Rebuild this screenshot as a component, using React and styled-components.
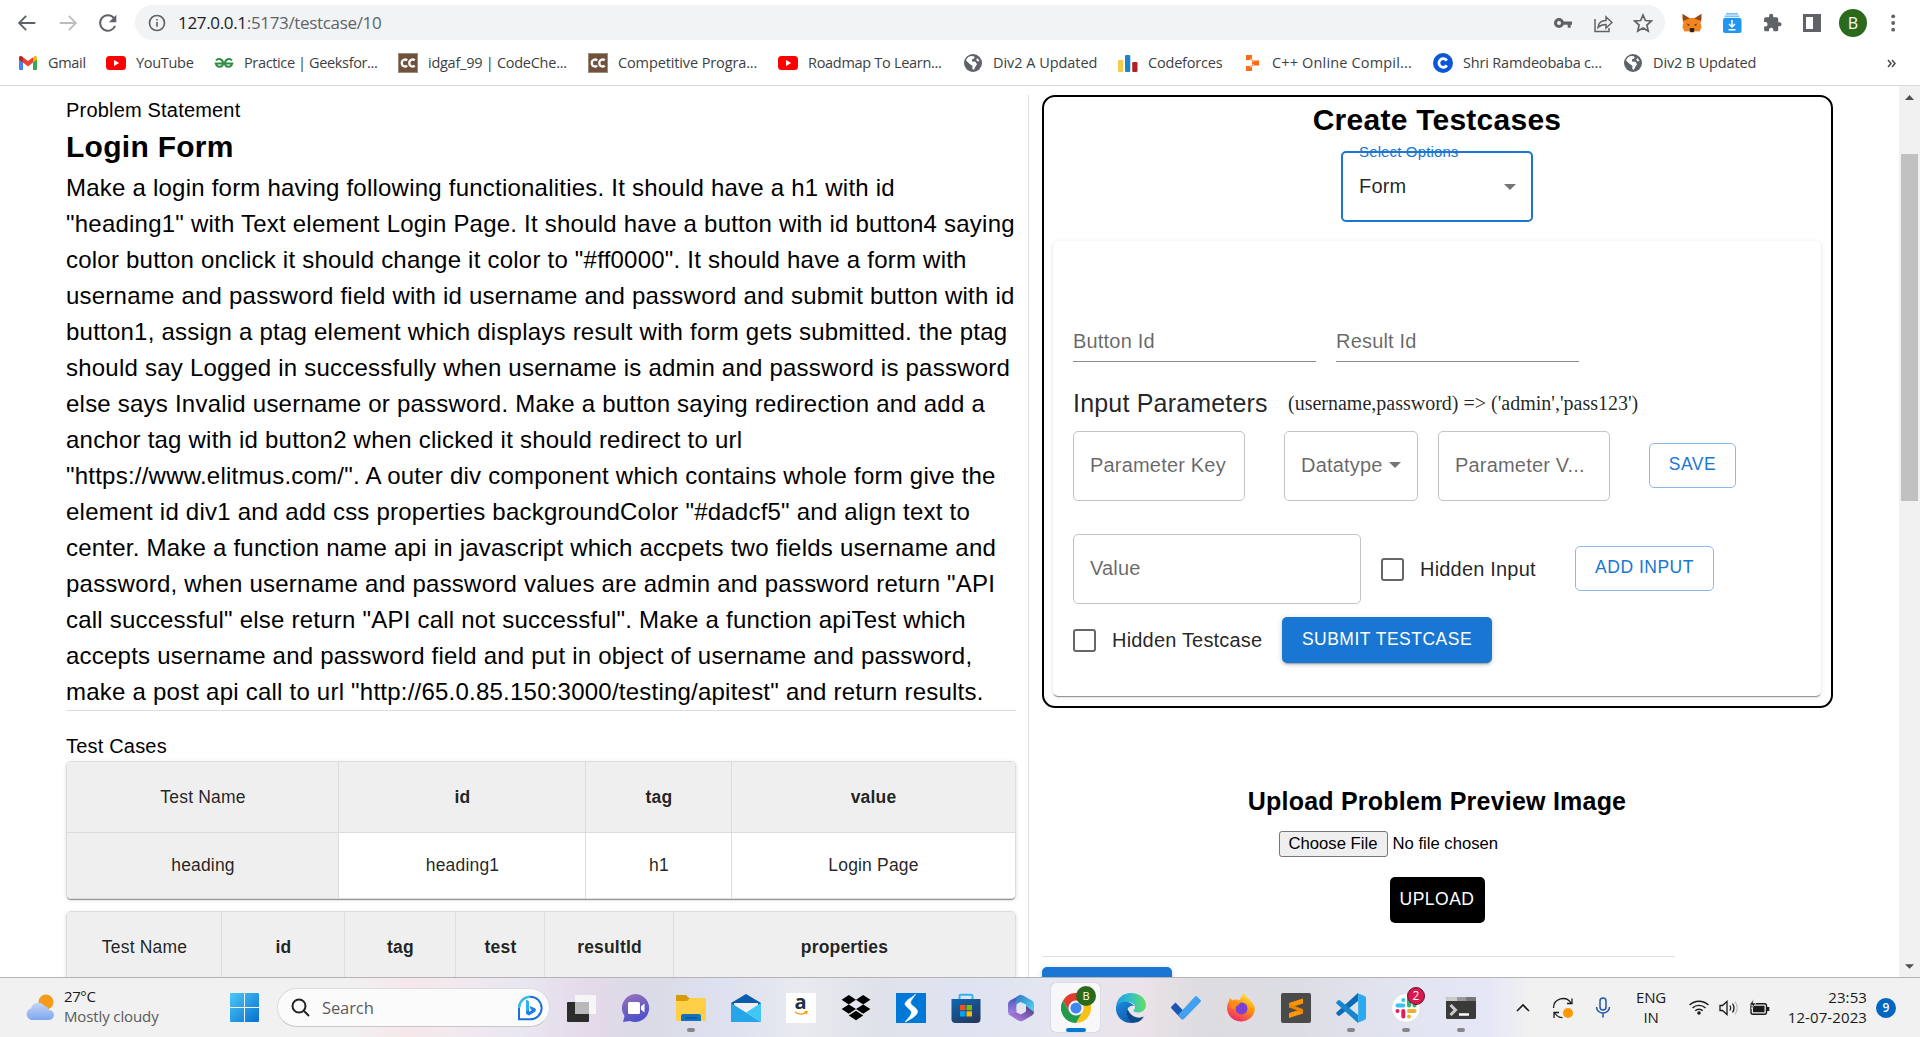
import React from "react";
import styled, { createGlobalStyle } from "styled-components";

const GlobalStyle = createGlobalStyle`
  *, *::before, *::after { box-sizing: border-box; }
  html, body { margin: 0; padding: 0; overflow: hidden; background: #fff; }
  svg { display: block; flex: none; }
`;

const sans = `"Liberation Sans", Arial, sans-serif`;
const ui = `"Open Sans", "Noto Sans", sans-serif`;
const blue = "#1976d2";

/* ---------- browser chrome ---------- */

const Screen = styled.div`
  width: 1920px;
  height: 1037px;
  display: flex;
  flex-direction: column;
  overflow: hidden;
  font-family: ${sans};
  color: #000;
`;

const Browser = styled.header`
  height: 86px;
  flex: none;
  display: flex;
  flex-direction: column;
  border-bottom: 1px solid #d8d9db;
  font-family: ${ui};
`;

const AddressRow = styled.div`
  height: 45px;
  display: flex;
  align-items: center;
  padding-left: 17px;
`;

const NavIcons = styled.div`
  display: flex;
  gap: 20.5px;
  width: 118px;
`;

const AddressBar = styled.div`
  width: 1530px;
  height: 35px;
  border-radius: 18px;
  background: #f1f3f4;
  display: flex;
  align-items: center;
  padding: 0 13px 0 13px;
`;

const Url = styled.span`
  margin-left: 12px;
  flex: 1;
  font-size: 17px;
  line-height: 24px;
  letter-spacing: -0.33px;
  color: #5f6368;
  white-space: nowrap;
`;

const Host = styled.span`
  color: #202124;
`;

const BarIcons = styled.div`
  display: flex;
  gap: 20px;
  margin-right: -1px;
`;

const Extensions = styled.div`
  display: flex;
  align-items: center;
  gap: 20px;
  margin-left: 17px;
`;

const Avatar = styled.span`
  width: 28px;
  height: 28px;
  margin: 0 -3px;
  border-radius: 50%;
  background: #2b6a1c;
  color: #fff;
  font-size: 16px;
  line-height: 28px;
  text-align: center;
`;

const Bookmarks = styled.nav`
  height: 36px;
  display: flex;
  align-items: center;
  padding-left: 18px;
`;

const Bookmark = styled.span`
  width: ${(p) => p.$w}px;
  flex: none;
  display: flex;
  align-items: center;
  gap: 10px;
  font-size: 14.5px;
  line-height: 20px;
  letter-spacing: ${(p) => p.$ls}px;
  color: #3c4043;
  white-space: nowrap;
`;

/* ---------- page ---------- */

const Page = styled.main`
  height: 891px;
  flex: none;
  display: flex;
  overflow: hidden;
`;

const Left = styled.section`
  width: 1029px;
  padding-left: 66px;
  margin: 9px 0 0;
  flex: none;
  border-right: 1px solid #e0e0e0;
`;

const LeftInner = styled.div`
  width: 950px;
`;

const Caption = styled.p`
  margin: 0;
  font-size: 20px;
  line-height: 30px;
  letter-spacing: 0.19px;
`;

const ProblemTitle = styled.h2`
  margin: 0 0 2px;
  font-size: 30px;
  line-height: 43px;
  letter-spacing: 0.28px;
`;

const Statement = styled.p`
  margin: 0;
  font-size: 24px;
  line-height: 36px;
  letter-spacing: 0.225px;
`;

const Rule = styled.hr`
  margin: 0;
  border: 0;
  height: 1px;
  width: ${(p) => p.$w};
  background: #dedede;
`;

const TestCases = styled.div`
  margin-top: 20px;
`;

const TestTable = styled.div`
  display: grid;
  grid-template-columns: ${(p) => p.$cols};
  margin-bottom: 12px;
  border: 1px solid #dcdcdc;
  border-radius: 5px;
  overflow: hidden;
  box-shadow: 0 2px 1px -1px rgba(0, 0, 0, 0.3), 0 1px 1px rgba(0, 0, 0, 0.14), 0 1px 4px rgba(0, 0, 0, 0.12);
`;

const Cell = styled.div`
  height: ${(p) => (p.$head ? 71 : 65)}px;
  display: flex;
  align-items: center;
  justify-content: center;
  background: ${(p) => (p.$head || p.$name ? "#efefef" : "#fff")};
  border-right: ${(p) => (p.$last ? 0 : 1)}px solid #dcdcdc;
  border-bottom: ${(p) => (p.$head ? 1 : 0)}px solid #dcdcdc;
  padding-top: ${(p) => (p.$head ? 1 : 0)}px;
  padding-left: ${(p) => (p.$last ? 0 : 1)}px;
  font-size: 17.5px;
  font-weight: ${(p) => (p.$bold ? 700 : 400)};
  letter-spacing: 0.18px;
  color: rgba(0, 0, 0, 0.87);
`;

const Right = styled.section`
  width: 870px;
  padding: 9px 0 0 13px;
  flex: none;
`;

const CreateCard = styled.div`
  width: 791px;
  height: 613px;
  border: 2px solid #000;
  border-radius: 13px;
  display: flex;
  flex-direction: column;
  align-items: center;
  padding-right: 1px;
  isolation: isolate;
`;

const CardTitle = styled.h2`
  margin: 5px 0 0;
  font-size: 30px;
  line-height: 36px;
  letter-spacing: 0.25px;
`;

const OptionSelect = styled.div`
  position: relative;
  margin-top: 13px;
  width: 192px;
  height: 71px;
  border: 2px solid ${blue};
  border-radius: 5px;
  display: flex;
  align-items: center;
  justify-content: space-between;
  padding: 0 15px 0 16px;
  font-size: 20px;
  letter-spacing: 0.19px;
  color: rgba(0, 0, 0, 0.87);
`;

const FloatLabel = styled.span`
  position: absolute;
  left: 16px;
  top: -10px;
  z-index: -1;
  font-size: 15px;
  line-height: 18px;
  letter-spacing: 0.14px;
  color: ${blue};
  white-space: nowrap;
`;

const Paper = styled.div`
  margin-top: 19px;
  width: 768px;
  height: 455px;
  border-radius: 5px;
  padding: 80px 20px 0;
  box-shadow: 0 2px 1px -1px rgba(0, 0, 0, 0.3), 0 1px 1px rgba(0, 0, 0, 0.14), 0 1px 4px rgba(0, 0, 0, 0.12);
`;

const FormRow = styled.div`
  display: flex;
  align-items: center;
  margin-top: ${(p) => p.$mt || 0}px;
`;

const LineField = styled.div`
  width: 243px;
  height: 41px;
  margin-right: 20px;
  border-bottom: 1px solid rgba(0, 0, 0, 0.45);
  font-size: 20px;
  line-height: 41px;
  letter-spacing: 0.19px;
  color: rgba(0, 0, 0, 0.6);
`;

const ParamTitle = styled.h6`
  margin: 0;
  width: 215px;
  font-size: 25px;
  line-height: 40px;
  font-weight: 400;
  letter-spacing: 0.19px;
  color: rgba(0, 0, 0, 0.87);
`;

const Signature = styled.span`
  font-family: "Liberation Serif", "Times New Roman", serif;
  font-size: 20px;
  line-height: 24px;
  color: rgba(0, 0, 0, 0.87);
`;

const BoxField = styled.div`
  width: ${(p) => p.$w}px;
  height: 70px;
  margin-right: ${(p) => p.$mr}px;
  border: 1px solid #c4c4c4;
  border-radius: 5px;
  padding: 0 16px 2px;
  display: flex;
  align-items: center;
  justify-content: space-between;
  font-size: 20px;
  letter-spacing: 0.19px;
  color: rgba(0, 0, 0, 0.6);
  white-space: nowrap;
`;

const Button = styled.button`
  width: ${(p) => p.$w}px;
  height: ${(p) => p.$h || 45}px;
  margin: ${(p) => (p.$solid ? "0" : "0 0 2px")};
  padding: 0 0 ${(p) => (p.$solid ? 2 : 1)}px;
  border: ${(p) => (p.$solid ? "0" : "1px solid #8cbae8")};
  border-radius: 5px;
  background: ${(p) => p.$solid || "#fff"};
  color: ${(p) => (p.$solid ? "#fff" : blue)};
  font-family: ${sans};
  font-size: 17.5px;
  letter-spacing: 0.5px;
  white-space: nowrap;
  box-shadow: ${(p) =>
    p.$raised
      ? "0 4px 1px -3px rgba(0,0,0,.2), 0 2px 3px rgba(0,0,0,.14), 0 1px 6px rgba(0,0,0,.12)"
      : "none"};
`;

const CheckLabel = styled.label`
  width: ${(p) => p.$w}px;
  display: flex;
  align-items: center;
  gap: 16px;
  font-size: 20px;
  line-height: 30px;
  letter-spacing: 0.19px;
  color: rgba(0, 0, 0, 0.87);
  white-space: nowrap;
`;

const CheckBox = styled.span`
  width: 23px;
  height: 23px;
  border: 2.5px solid #666;
  border-radius: 3px;
`;

const Upload = styled.div`
  width: 790px;
  margin-top: 74px;
  display: flex;
  flex-direction: column;
  align-items: center;
`;

const UploadTitle = styled.h3`
  margin: 0;
  font-size: 25px;
  line-height: 38px;
  letter-spacing: 0.22px;
`;

const FileRow = styled.div`
  width: 317px;
  margin-top: 11px;
  display: flex;
  align-items: center;
  gap: 5px;
  font-size: 16.67px;
  line-height: 20px;
  white-space: nowrap;
`;

const FileButton = styled.span`
  width: 109px;
  height: 26px;
  border: 1px solid #767676;
  border-radius: 3px;
  background: #efefef;
  text-align: center;
  line-height: 23px;
`;

const UploadButton = styled(Button)`
  margin-top: 20px;
  padding-bottom: 1px;
`;

const NextButton = styled(Button)`
  display: block;
  margin-top: 10px;
`;

const Spacer = styled.div`
  height: 33px;
`;

const Scroll = styled.aside`
  width: 21px;
  background: #f1f1f1;
  display: flex;
  flex-direction: column;
  align-items: center;
  padding: 9px 0 8px;
`;

const Thumb = styled.div`
  width: 17px;
  height: 347px;
  margin: 54px 0 auto;
  background: #c1c1c1;
`;

/* ---------- taskbar ---------- */

const Taskbar = styled.footer`
  height: 60px;
  flex: none;
  display: flex;
  align-items: center;
  border-top: 1px solid #b4b4b8;
  font-family: ${ui};
  background: linear-gradient(
    90deg, #f1f1f1 0, #f1f1f1 350px, #f6e7ea 405px, #f3e9ee 450px, #e9e7f1 520px, #e4d9ea 590px,
    #dadbe7 650px, #dee1ef 730px, #e8eaef 800px, #e0e2ea 880px, #dfe3f0 960px, #e2e6f1 1030px,
    #ebe3e9 1140px, #dddce0 1200px, #dcdde4 1300px, #e2e4f1 1400px, #e5e7f6 1490px, #f1f1f1 1530px, #f1f1f1 100%
  );
`;

const Weather = styled.div`
  width: 230px;
  padding-left: 24px;
  display: flex;
  align-items: center;
  gap: 8px;
  font-size: 15px;
  line-height: 20px;
  color: #5a5a5a;
  letter-spacing: -0.12px;
  white-space: nowrap;
`;

const WeatherText = styled.div`
  padding-bottom: 4px;
`;

const Dark = styled.div`
  color: #1a1a1a;
  letter-spacing: -0.4px;
`;

const SearchBox = styled.div`
  width: 273px;
  height: 39px;
  margin: 0 6px 0 18px;
  border: 1px solid #dcdce0;
  border-bottom-color: #c8c8cc;
  border-radius: 20px;
  background: #fcfbfc;
  display: flex;
  align-items: center;
  padding: 0 6px 0 13px;
  font-size: 16.5px;
  color: #5c5c5c;
`;

const SearchText = styled.span`
  margin-left: 12px;
  flex: 1;
  line-height: 24px;
  letter-spacing: -0.1px;
`;

const AppSlot = styled.div`
  position: relative;
  width: 49px;
  height: 49px;
  margin-right: 6px;
  flex: none;
  display: flex;
  align-items: center;
  justify-content: center;
  border-radius: 5px;
  background: ${(p) => (p.$active ? "rgba(255,255,255,.7)" : "none")};
  box-shadow: ${(p) => (p.$active ? "0 0 1px rgba(0,0,0,.4)" : "none")};
`;

const Indicator = styled.i`
  position: absolute;
  bottom: 0;
  left: ${(p) => (p.$active ? 14.5 : 20.5)}px;
  width: ${(p) => (p.$active ? 20 : 8)}px;
  height: 4px;
  border-radius: 2px;
  background: ${(p) => (p.$active ? "#0078d4" : "#85858a")};
`;

const Badge = styled.span`
  position: absolute;
  top: ${(p) => p.$top}px;
  left: ${(p) => p.$left}px;
  width: ${(p) => p.$size}px;
  height: ${(p) => p.$size}px;
  border-radius: 50%;
  border: ${(p) => p.$border || "0"};
  background: ${(p) => p.$bg};
  color: #fff;
  font-size: ${(p) => p.$fs}px;
  line-height: ${(p) => p.$lh}px;
  text-align: center;
`;

const Tray = styled.div`
  display: flex;
  align-items: center;
  margin-left: 22px;
`;

const TraySlot = styled.span`
  width: ${(p) => p.$w}px;
  flex: none;
  display: flex;
  justify-content: center;
`;

const TrayText = styled.div`
  width: ${(p) => p.$w}px;
  flex: none;
  padding-bottom: 1px;
  text-align: ${(p) => p.$align};
  font-size: 15px;
  line-height: 20px;
  color: #1a1a1a;
  letter-spacing: ${(p) => p.$ls}px;
`;

const Notice = styled.span`
  width: 20px;
  height: 20px;
  margin-left: 9px;
  border-radius: 50%;
  background: #0067c0;
  color: #fff;
  font-size: 12px;
  font-weight: 600;
  line-height: 20px;
  text-align: center;
`;

/* ---------- drawings ---------- */

const Icon = ({ s = 20, w, h, vb = "0 0 24 24", children, ...rest }) => (
  <svg width={w || s} height={h || s} viewBox={vb} fill="none" {...rest}>
    {children}
  </svg>
);

const Caret = ({ w = 12, h = 6, fill = "#757575" }) => (
  <svg width={w} height={h} viewBox="0 0 12 6">
    <path d="M0 0h12L6 6z" fill={fill} />
  </svg>
);

const YouTube = () => (
  <Icon vb="0 0 20 20">
    <rect y="3" width="20" height="14" rx="3.500" fill="#f00" />
    <path d="M8 7v6l5.200-3z" fill="#fff" />
  </Icon>
);

const CodeChef = () => (
  <Icon vb="0 0 20 20">
    <rect width="20" height="20" fill="#6e523d" />
    <rect x=".5" y=".5" width="19" height="19" stroke="#a08a78" />
    <path d="M9.200 7.400C7.400 5.800 3.800 6.400 3.800 10s3.600 4.200 5.400 2.600M16.700 7.400c-1.800-1.600-5.400-1-5.400 2.600s3.600 4.200 5.400 2.600" stroke="#fff" strokeWidth="2.300" />
  </Icon>
);

const Globe = () => (
  <Icon vb="0 0 20 20">
    <circle cx="10" cy="10" r="9" fill="#5f6368" />
    <path d="M9 3c2 0 3 .8 2.400 2.200L9 6.500v2l3.500.3 1.500 2.400-1.500 2.400-1.600 3.200-1.600-.8.2-3-3-2.200L3 7.500C3.800 5 6 3 9 3zM14.500 5l2 3-1.800.6-1.600-1.800z" fill="#fff" />
  </Icon>
);

const Gmail = () => (
  <Icon vb="0 0 20 20">
    <path d="M1 5v11q0 1 1 1h3V8.500z" fill="#4285f4" />
    <path d="M15 8.500V17h3q1 0 1-1V5z" fill="#34a853" />
    <path d="M1 4.500C1 3 3 2.500 4 3.400l1 .8v5.400L1 6.600z" fill="#c5221f" />
    <path d="M15 4.200l1-.8c1.200-.9 3-.4 3 1.100v2.100l-4 3z" fill="#fbbc04" />
    <path d="M5 4.200l5 3.800 5-3.800v5.400l-5 3.800-5-3.800z" fill="#ea4335" />
  </Icon>
);

const Gfg = () => (
  <Icon vb="0 0 20 20">
    <path d="M2 7.500C4 5 9 5.600 9 10.200S3 15 1.800 10.500H18.200C17 15 11 14.800 11 10.200S16 5 18 7.500" stroke="#2f8d46" strokeWidth="2" />
  </Icon>
);

const Bars = () => (
  <Icon vb="0 0 20 20">
    <rect x="0" y="7" width="5.300" height="12" rx="1.300" fill="#f8cc4b" />
    <rect x="7" y="2" width="5.300" height="17" rx="1.300" fill="#1c86c8" />
    <rect x="14.200" y="9" width="5.300" height="10" rx="1.300" fill="#b61f24" />
  </Icon>
);

const Steps = () => (
  <Icon vb="0 0 20 20">
    <path d="M4 2h6v5H4zM10 7.500h7v5h-7zM4 13h6v5H4z" fill="#ff6a13" />
    <path d="M8 6l4 2.500M8 14l4-2.500" stroke="#ffb483" strokeWidth="1.500" />
  </Icon>
);

const RoundC = () => (
  <Icon vb="0 0 20 20">
    <circle cx="10" cy="10" r="10" fill="#0b57d8" />
    <path d="M13.800 7.600a4.300 4.300 0 1 0 0 4.800" stroke="#fff" strokeWidth="2.800" />
  </Icon>
);

const Fox = () => (
  <Icon vb="0 0 20 20">
    <path d="M.6 1l7 4h4.800l7-4 .2 5-1 4 1 4-2 4.500-4-.8-2 1.800H8.400l-2-1.800-4 .8L.4 14l1-4-1-4z" fill="#f5841f" />
    <path d="M.6 1l7 4.500-4.800 1.800L1 8zM19.400 1l-7 4.500 4.800 1.800L19 8z" fill="#8b4a20" />
    <path d="M5 10.500l3 1.500-2 .8zM15 10.500L12 12l2 .8z" fill="#26343f" />
    <path d="M7.500 16l1-1h3l1 1-.8 3H8.300z" fill="#2a2020" />
    <path d="M2 17.500l4-2.500 2 3-3 .5zM18 17.500L14 15l-2 3 3 .5z" fill="#e8862f" />
  </Icon>
);

const Downloader = () => (
  <Icon vb="0 0 20 20">
    <path d="M4 .9h12M2.500 3.400h15" stroke="#7fc4f8" strokeWidth="1.600" />
    <rect x="1" y="5" width="18.500" height="15" rx="2" fill="#2196f3" />
    <path d="M10 7v6.500M7 11l3 3 3-3M6.500 16.700h7" stroke="#fff" strokeWidth="1.500" />
  </Icon>
);

const icons = {
  taskview: (
    <Icon s={30} vb="0 0 30 30">
      <rect x="1" y="9" width="22" height="20" rx="1" fill="#2c2c2c" />
      <path d="M9 2h21v19H9z" fill="#f7f7f8" opacity=".9" />
      <path d="M9 9h14v12H9z" fill="#b9b9bb" />
    </Icon>
  ),
  chat: (
    <Icon s={30} vb="0 0 30 30">
      <defs>
        <linearGradient id="chat" x1="0" y1="0" x2=".4" y2="1">
          <stop stopColor="#9b72b8" />
          <stop offset="1" stopColor="#4f52c9" />
        </linearGradient>
      </defs>
      <path d="M15 1a14 14 0 1 1-6 27l-7 1 1.500-6A14 14 0 0 1 15 1z" fill="url(#chat)" />
      <rect x="7" y="9" width="12" height="12" rx="1.500" fill="#fff" />
      <path d="M20 13.500l3.500-3v9l-3.500-3z" fill="#fff" />
    </Icon>
  ),
  folder: (
    <Icon s={30} vb="0 0 30 30">
      <path d="M0 3q0-1 1-1h9l3 3h16v8H0z" fill="#d99a05" />
      <path d="M0 8h11l3-3h15q1 0 1 1v21q0 1-1 1H1q-1 0-1-1z" fill="#ffcf48" />
      <path d="M5 28v-5q0-2 2-2h16q2 0 2 2v5z" fill="#1273bd" />
      <path d="M9 25h12" stroke="#0a4a86" strokeWidth="1.200" />
    </Icon>
  ),
  mail: (
    <Icon s={30} vb="0 0 30 30">
      <path d="M0 10L15 1l15 9v8H0z" fill="#0a5cad" />
      <path d="M3 10h24v8l-12 6-12-6z" fill="#f0f0f2" />
      <path d="M0 10l15 9.500L30 29H0z" fill="#26a6e8" />
      <path d="M30 10v19L15 19.500z" fill="#3fc6f4" />
    </Icon>
  ),
  dropbox: (
    <Icon s={30} vb="0 0 30 30">
      <path d="M7.800 2L15 6.700l-7.200 4.700L.6 6.700zM22.200 2l7.200 4.700-7.200 4.700L15 6.700zM7.800 11.400l7.200 4.700-7.200 4.700-7.200-4.700zM22.200 11.400l7.200 4.700-7.200 4.700-7.200-4.700zM15 17.800l7.200 4.700L15 27.300l-7.200-4.800z" fill="#000" />
    </Icon>
  ),
  dstock: (
    <Icon s={30} vb="0 0 30 30">
      <path d="M0 0h30v30H0z" fill="#0078d7" />
      <path d="M19.500 1c-1.500 3-9 5-10.500 9.500-.5 3 5.500 5.500 6.500 8.500 0 3-3.500 6.500-6.500 10 5-2.500 12-6 12.500-10 .3-4-6-6-7-9C14.500 7 18 4.500 19.500 1z" fill="#fff" stroke="#fff" strokeWidth=".6" />
    </Icon>
  ),
  store: (
    <Icon s={30} vb="0 0 30 30">
      <defs>
        <linearGradient id="store" x1="0" y1="0" x2=".6" y2="1">
          <stop stopColor="#0e68b4" />
          <stop offset="1" stopColor="#243a63" />
        </linearGradient>
      </defs>
      <path d="M8.500 7V3q0-1.200 1.200-1.200h10.600q1.200 0 1.200 1.200v4" stroke="#33b4ee" strokeWidth="2" />
      <path d="M.5 6h29v20q0 4-4 4h-21q-4 0-4-4z" fill="url(#store)" />
      <path d="M9 12h5.500v5.300H9z" fill="#f25022" />
      <path d="M15.500 12H21v5.300h-5.500z" fill="#7fba00" />
      <path d="M9 18.300h5.500v5.200H9z" fill="#00a4ef" />
      <path d="M15.500 18.300H21v5.200h-5.500z" fill="#ffb900" />
    </Icon>
  ),
  m365: (
    <Icon s={30} vb="0 0 30 30">
      <defs>
        <linearGradient id="m1" x1="0" y1="0" x2="0" y2="1">
          <stop stopColor="#3b4cb8" />
          <stop offset="1" stopColor="#b58be4" />
        </linearGradient>
        <linearGradient id="m2" x1="0" y1="0" x2="1" y2="1">
          <stop stopColor="#3277c4" />
          <stop offset="1" stopColor="#55dcf5" />
        </linearGradient>
        <linearGradient id="m3" x1="0" y1="1" x2="1" y2="0">
          <stop stopColor="#c08af0" />
          <stop offset="1" stopColor="#4b3a86" />
        </linearGradient>
      </defs>
      <path d="M15 1.500L4 7.500Q2 9 2 11v9l8.500 4V11z" fill="url(#m1)" />
      <path d="M11 3.500Q14 1 17 2.500l9 5q2 1 2 4v8l-8-4v-4L14.500 9 9 12z" fill="url(#m2)" />
      <path d="M28 19q0 2-2 3.500l-8.500 5Q15 29 12 27.500L2 21l8.500-1.500 4.500 2 5-3V13z" fill="url(#m3)" />
      <circle cx="15" cy="15" r="4.500" fill="#e2e5f0" />
    </Icon>
  ),
  chrome: (
    <Icon s={30} vb="0 0 30 30">
      <path d="M2 7.500A15 15 0 0 1 28 7.500H15a7.500 7.500 0 0 0-6.500 11.200z" fill="#e33b2e" />
      <path d="M28 7.500A15 15 0 0 1 15 30l6.500-11.300A7.500 7.500 0 0 0 15 7.500z" fill="#fbc116" />
      <path d="M15 30A15 15 0 0 1 2 7.500l6.500 11.200a7.500 7.500 0 0 0 13 0z" fill="#229a4b" />
      <circle cx="15" cy="15" r="7" fill="#fff" />
      <circle cx="15" cy="15" r="5.600" fill="#4086f4" />
    </Icon>
  ),
  edge: (
    <Icon s={30} vb="0 0 30 30">
      <defs>
        <linearGradient id="e1" x1="0" y1=".3" x2="1" y2=".3">
          <stop stopColor="#1c9fe0" />
          <stop offset=".5" stopColor="#35c1c8" />
          <stop offset="1" stopColor="#63e05a" />
        </linearGradient>
        <linearGradient id="e2" x1="0" y1="0" x2=".6" y2="1">
          <stop stopColor="#1b8ade" />
          <stop offset="1" stopColor="#0f5fae" />
        </linearGradient>
      </defs>
      <path d="M0 14C1 5 7 0 15 0c9 0 15 6 15 12 0 5-4 7.500-8 7.500-3 0-5-1-4.500-2 .7-1 1.500-2 1.500-3.500C19 11 15 9 11 9 6 9 2 12 0 14z" fill="url(#e1)" />
      <path d="M0 14C3 9 8 8 12 9c3 1 5 2 6 4-3-1-7 1-7 6 0 5 3 9 7 10.700C8 31.500-1 24 0 14z" fill="url(#e2)" />
      <path d="M11.500 16c-2.500 6 2 13.700 6.500 13.700 4.500 0 8-2.700 9.800-6.200-3 1.500-6.500 1.500-9.800 0-3.500-1.500-5-4.500-6.500-7.500z" fill="#10488a" />
    </Icon>
  ),
  todo: (
    <Icon s={30} vb="0 0 30 30">
      <path d="M4.500 9.500L.5 13.500q-1 1 0 2l10.500 11 5-5z" fill="#1b56b4" />
      <path d="M24 3.500q1-1 2 0l3.500 3.500q1 1 0 2L13 26q-1 1-2 0l-4-4z" fill="#42a0ee" />
    </Icon>
  ),
  firefox: (
    <Icon s={30} vb="0 0 30 30">
      <defs>
        <linearGradient id="ff" x1=".8" y1="0" x2=".3" y2="1">
          <stop stopColor="#fff04a" />
          <stop offset=".45" stopColor="#ff980e" />
          <stop offset="1" stopColor="#f0246e" />
        </linearGradient>
      </defs>
      <path d="M18 0c1 3 3 4 5.500 6.500C27 10 29 13 29 16A14 13.500 0 1 1 2.500 9L4 5l2.500 2.500C8 6.500 11 6 13.500 7 15 5 16 2 18 0z" fill="url(#ff)" />
      <circle cx="15.500" cy="15.500" r="6" fill="#7b3fd6" />
      <path d="M4 8.500c3-1 8-1 10 2l-3 2.500c-2 .5-2 2-1 3.500L5 15z" fill="#ff8a16" />
    </Icon>
  ),
  sublime: (
    <Icon s={30} vb="0 0 30 30">
      <rect width="30" height="30" rx="2" fill="#4a4a4a" />
      <path d="M22 5.500v5l-9 2.800 9 3v4.200L8 25v-5l9-2.800-9-3V10z" fill="#ff9800" />
      <path d="M8 10l14 6.300v4L8 14.200z" fill="#e57c00" opacity=".6" />
    </Icon>
  ),
  vscode: (
    <Icon s={30} vb="0 0 30 30">
      <path d="M22 0v8L4 22.500q-1 .8-2 0l-1.300-1.200q-1-1 0-2z" fill="#0a6cb4" />
      <path d="M22 30v-8L4 7.500q-1-.8-2 0L.7 8.700q-1 1 0 2z" fill="#1587cf" />
      <path d="M21 0l7.500 3Q30 3.700 30 5v20q0 1.300-1.500 2L21 30q1.200-.5 1.200-2V2Q22.200.5 21 0z" fill="#2aa8f0" />
    </Icon>
  ),
  slack: (
    <Icon s={30} vb="0 0 30 30">
      <circle cx="15" cy="15" r="14.500" fill="#fff" stroke="#ddd" />
      <g strokeWidth="4" strokeLinecap="round">
        <path d="M12.300 7v.1M6.500 12.500h5.800" stroke="#36c5f0" />
        <path d="M23.500 12.500v.1M18 6.500v6" stroke="#2eb67d" />
        <path d="M18 23.500v.1M18 18h5.500" stroke="#ecb22e" />
        <path d="M6.500 18v.1M12.300 18v5.500" stroke="#e01e5a" />
      </g>
    </Icon>
  ),
  terminal: (
    <Icon s={30} vb="0 0 30 30">
      <rect y="4" width="30" height="22" rx="1.500" fill="#3a3a3a" />
      <path d="M1 4h10v4H0V5z" fill="#ccc" />
      <path d="M11 4h9v4h-9z" fill="#999" />
      <path d="M20 4h9l1 1v3H20z" fill="#777" />
      <path d="M4.500 12l5 5-5 5" stroke="#ccc" strokeWidth="3" />
      <path d="M13 21.500h10" stroke="#fff" strokeWidth="2.500" />
    </Icon>
  ),
};

const AmazonTile = styled.div`
  width: 30px;
  height: 30px;
  background: #fff;
  display: flex;
  flex-direction: column;
  align-items: center;
  font: 700 20px/20px "Open Sans", sans-serif;
  color: #232f3e;
`;

const AmazonLetter = styled.span`
  height: 18px;
  line-height: 17px;
`;

const Amazon = () => (
  <AmazonTile>
    <AmazonLetter>a</AmazonLetter>
    <svg width="14" height="5" viewBox="0 0 14 5" fill="none">
      <path d="M1 1q6 4 11.500.3M10.500.8l2.500-.2-.6 2.600" stroke="#f90" strokeWidth="1.200" />
    </svg>
  </AmazonTile>
);

/* ---------- content ---------- */

const bookmarks = [
  { w: 88, ls: -0.3, icon: <Gmail />, text: "Gmail" },
  { w: 108, ls: -0.3, icon: <YouTube />, text: "YouTube" },
  { w: 184, ls: -0.36, icon: <Gfg />, text: "Practice | Geeksfor..." },
  { w: 190, ls: -0.26, icon: <CodeChef />, text: "idgaf_99 | CodeChe..." },
  { w: 190, ls: -0.12, icon: <CodeChef />, text: "Competitive Progra..." },
  { w: 185, ls: -0.3, icon: <YouTube />, text: "Roadmap To Learn..." },
  { w: 155, ls: -0.04, icon: <Globe />, text: "Div2 A Updated" },
  { w: 124, ls: -0.2, icon: <Bars />, text: "Codeforces" },
  { w: 191, ls: 0.16, icon: <Steps />, text: "C++ Online Compil..." },
  { w: 190, ls: -0.18, icon: <RoundC />, text: "Shri Ramdeobaba c..." },
  { w: 264, ls: -0.14, icon: <Globe />, text: "Div2 B Updated" },
];

const statement =
  'Make a login form having following functionalities. It should have a h1 with id "heading1" with Text element Login Page. It should have a button with id button4 saying color button onclick it should change it color to "#ff0000". It should have a form with username and password field with id username and password and submit button with id button1, assign a ptag element which displays result with form gets submitted. the ptag should say Logged in successfully when username is admin and password is password else says Invalid username or password. Make a button saying redirection and add a anchor tag with id button2 when clicked it should redirect to url "https://www.elitmus.com/". A outer div component which contains whole form give the element id div1 and add css properties backgroundColor "#dadcf5" and align text to center. Make a function name api in javascript which accpets two fields username and password, when username and password values are admin and password return "API call successful" else return "API call not successful". Make a function apiTest which accepts username and password field and put in object of username and password, make a post api call to url "http://65.0.85.150:3000/testing/apitest" and return results.';

const apps = [
  { id: "taskview" },
  { id: "chat" },
  { id: "folder", open: true },
  { id: "mail" },
  { id: "amazon" },
  { id: "dropbox" },
  { id: "dstock" },
  { id: "store" },
  { id: "m365" },
  { id: "chrome", active: true },
  { id: "edge" },
  { id: "todo" },
  { id: "firefox" },
  { id: "sublime" },
  { id: "vscode", open: true },
  { id: "slack", open: true },
  { id: "terminal", open: true },
];

function BrowserChrome() {
  return (
    <Browser>
      <AddressRow>
        <NavIcons>
          <Icon stroke="#5f6368" strokeWidth="2.200"><path d="M22 12H3M11 3.500L2.500 12l8.500 8.500" /></Icon>
          <Icon stroke="#bcbec1" strokeWidth="2.200"><path d="M2 12h19M13 3.500l8.500 8.500-8.500 8.500" /></Icon>
          <Icon stroke="#5f6368" strokeWidth="2.400"><path d="M20.500 15.500A9.300 9.300 0 1 1 19 6" /><path d="M22 2v9h-9z" fill="#5f6368" stroke="none" /></Icon>
        </NavIcons>
        <AddressBar>
          <Icon s={18} stroke="#5f6368" strokeWidth="2.200"><circle cx="12" cy="12" r="10" /><path d="M12 10.500V17M12 6.500v2.300" /></Icon>
          <Url><Host>127.0.0.1</Host>:5173/testcase/10</Url>
          <BarIcons>
            <Icon vb="0 0 20 20"><circle cx="6" cy="10" r="3.500" stroke="#5f6368" strokeWidth="3" /><path d="M9 8.500h10v3.200h-1.300v3h-3v-3H9z" fill="#5f6368" /></Icon>
            <Icon vb="0 0 20 20" stroke="#5f6368" strokeWidth="1.500"><path d="M2 6v12.500h14V15M5 14.500c.5-4.500 3-7 8-7V4l6 5.500-6 5.500v-3.500c-4 0-6 1-8 3z" /></Icon>
            <Icon vb="0 0 20 20" stroke="#5f6368" strokeWidth="1.700"><path d="M10 2l2.400 5.500 6 .5-4.500 4 1.300 6L10 14.900 4.800 18l1.300-6L1.600 8l6-.5z" /></Icon>
          </BarIcons>
        </AddressBar>
        <Extensions>
          <Fox />
          <Downloader />
          <Icon><path d="M21 11h-1.500V7a2 2 0 0 0-2-2h-4V3.500a2.500 2.500 0 0 0-5 0V5h-4a2 2 0 0 0-2 2v3.800H4a2.700 2.700 0 0 1 0 5.400H2.500V20a2 2 0 0 0 2 2h3.800v-1.500a2.700 2.700 0 0 1 5.400 0V22h3.800a2 2 0 0 0 2-2v-4H21a2.500 2.500 0 0 0 0-5z" fill="#5f6368" /></Icon>
          <Icon vb="0 0 20 20"><path d="M1 1h18v18H1zM4 4v12h7V4z" fillRule="evenodd" fill="#5f6368" /></Icon>
          <Avatar>B</Avatar>
          <Icon><g fill="#5f6368"><circle cx="11" cy="4" r="2.300" /><circle cx="11" cy="12" r="2.300" /><circle cx="11" cy="20" r="2.300" /></g></Icon>
        </Extensions>
      </AddressRow>
      <Bookmarks>
        {bookmarks.map((b) => (
          <Bookmark key={b.text} $w={b.w} $ls={b.ls}>{b.icon}{b.text}</Bookmark>
        ))}
        <Icon s={9} vb="0 0 9 9" stroke="#45484c" strokeWidth="1.500"><path d="M1 1l3 3.500L1 8M5 1l3 3.500L5 8" /></Icon>
      </Bookmarks>
    </Browser>
  );
}

function ProblemPane() {
  return (
    <Left>
      <LeftInner>
        <Caption>Problem Statement</Caption>
        <ProblemTitle>Login Form</ProblemTitle>
        <Statement>{statement}</Statement>
        <Rule $w="100%" />
        <TestCases>
          <Caption>Test Cases</Caption>
          <TestTable $cols="272px 247px 146px 1fr">
            <Cell $head>Test Name</Cell>
            <Cell $head $bold>id</Cell>
            <Cell $head $bold>tag</Cell>
            <Cell $head $bold $last>value</Cell>
            <Cell $name>heading</Cell>
            <Cell>heading1</Cell>
            <Cell>h1</Cell>
            <Cell $last>Login Page</Cell>
          </TestTable>
          <TestTable $cols="155px 123px 111px 89px 129px 1fr">
            <Cell $head>Test Name</Cell>
            <Cell $head $bold>id</Cell>
            <Cell $head $bold>tag</Cell>
            <Cell $head $bold>test</Cell>
            <Cell $head $bold>resultId</Cell>
            <Cell $head $bold $last>properties</Cell>
          </TestTable>
        </TestCases>
      </LeftInner>
    </Left>
  );
}

function TestcasePane() {
  return (
    <Right>
      <CreateCard>
        <CardTitle>Create Testcases</CardTitle>
        <OptionSelect>
          <FloatLabel>Select Options</FloatLabel>
          Form
          <Caret />
        </OptionSelect>
        <Paper>
          <FormRow>
            <LineField>Button Id</LineField>
            <LineField>Result Id</LineField>
          </FormRow>
          <FormRow $mt={21}>
            <ParamTitle>Input Parameters</ParamTitle>
            <Signature>{"(username,password) => ('admin','pass123')"}</Signature>
          </FormRow>
          <FormRow $mt={8}>
            <BoxField $w={172} $mr={39}>Parameter Key</BoxField>
            <BoxField $w={134} $mr={20}>Datatype<Caret /></BoxField>
            <BoxField $w={172} $mr={39}>Parameter V...</BoxField>
            <Button $w={87}>SAVE</Button>
          </FormRow>
          <FormRow $mt={33}>
            <BoxField $w={288} $mr={20}>Value</BoxField>
            <CheckLabel $w={194}><CheckBox />Hidden Input</CheckLabel>
            <Button $w={139}>ADD INPUT</Button>
          </FormRow>
          <FormRow $mt={13}>
            <CheckLabel $w={209}><CheckBox />Hidden Testcase</CheckLabel>
            <Button $w={210} $h={46} $solid={blue} $raised>SUBMIT TESTCASE</Button>
          </FormRow>
        </Paper>
      </CreateCard>
      <Upload>
        <UploadTitle>Upload Problem Preview Image</UploadTitle>
        <FileRow><FileButton>Choose File</FileButton>No file chosen</FileRow>
        <UploadButton $w={95} $h={46} $solid="#000">UPLOAD</UploadButton>
      </Upload>
      <Spacer />
      <Rule $w="633px" />
      <NextButton $w={130} $h={46} $solid={blue} $raised />
    </Right>
  );
}

function SystemBar() {
  return (
    <Taskbar>
      <Weather>
        <Icon s={32} vb="0 0 32 32">
          <defs>
            <linearGradient id="cloud" x1="0" y1="0" x2="0" y2="1">
              <stop stopColor="#c5d5f8" />
              <stop offset="1" stopColor="#7fa7ec" />
            </linearGradient>
          </defs>
          <circle cx="22" cy="10" r="7.500" fill="#f59b1c" />
          <path d="M7 28a6 6 0 0 1 0-11.500A7.500 7.500 0 0 1 20.500 14 6 6 0 0 1 25 18a5 5 0 0 1 0 10z" fill="url(#cloud)" />
        </Icon>
        <WeatherText>
          <Dark>27°C</Dark>
          Mostly cloudy
        </WeatherText>
      </Weather>
      <Icon s={29} vb="0 0 29 29">
        <defs>
          <linearGradient id="win" x1="0" y1="0" x2="1" y2="1">
            <stop stopColor="#4cc9f8" />
            <stop offset="1" stopColor="#0670cf" />
          </linearGradient>
        </defs>
        <path d="M0 1q0-1 1-1h13v14H0zM15 0h13q1 0 1 1v13H15zM0 15h14v14H1q-1 0-1-1zM15 15h14v13q0 1-1 1H15z" fill="url(#win)" />
      </Icon>
      <SearchBox>
        <Icon s={19} vb="0 0 19 19" stroke="#222" strokeWidth="2"><circle cx="8" cy="8" r="6.500" /><path d="M12.800 12.800L18 18" /></Icon>
        <SearchText>Search</SearchText>
        <Icon s={26} vb="0 0 26 26">
          <path d="M2 13a11.300 11.300 0 1 1 11 11.300H2z" stroke="#1c6fd8" strokeWidth="2" fill="#fff" />
          <path d="M2 13A11.300 11.300 0 0 1 13 1.700" stroke="#30c3ea" strokeWidth="2" />
          <path d="M9 5l3 1.200v10.500l3-1.700-1.500-1-1-3 5.500 2.200q1.500 1 .5 3.300L12 20.500l-3-1.700z" fill="#1f7fe0" />
          <path d="M9 5l3 1.200v8L9 17z" fill="#2db4f0" />
        </Icon>
      </SearchBox>
      {apps.map((a) => (
        <AppSlot key={a.id} $active={a.active}>
          {a.id === "amazon" ? <Amazon /> : icons[a.id]}
          {a.id === "chrome" && <Badge $top={3} $left={25} $size={20} $bg="#2b6a1c" $fs={11} $lh={20}>B</Badge>}
          {a.id === "slack" && <Badge $top={4} $left={26} $size={18} $bg="#d9184e" $border="1px solid #5b1530" $fs={12} $lh={15}>2</Badge>}
          {(a.open || a.active) && <Indicator $active={a.active} />}
        </AppSlot>
      ))}
      <Tray>
        <TraySlot $w={20}><Icon s={14} vb="0 0 14 14" stroke="#1a1a1a" strokeWidth="1.600"><path d="M1 10l6-6 6 6" /></Icon></TraySlot>
        <TraySlot $w={60}>
          <Icon s={22} vb="0 0 22 22" stroke="#1a1a1a" strokeWidth="1.300">
            <path d="M1.500 11A9.500 9.500 0 0 1 19 6M20 1.500v5h-5M2 21v-5.500h5M2.500 16q3 4.500 8 4.700" />
            <circle cx="16" cy="16" r="5" fill="#ff9800" stroke="none" />
          </Icon>
        </TraySlot>
        <TraySlot $w={20}>
          <Icon w={16} h={21} vb="0 0 16 21" stroke="#2158a8" strokeWidth="1.500"><rect x="5" y="1" width="6" height="12" rx="3" /><path d="M1.500 10a6.500 6 0 0 0 13 0M8 16v4.500" /></Icon>
        </TraySlot>
        <TrayText $w={76} $align="center" $ls={-0.2}>ENG<br />IN</TrayText>
        <TraySlot $w={20}>
          <Icon w={20} h={15} vb="0 0 20 15" stroke="#1a1a1a" strokeWidth="1.400"><path d="M.6 5a13.500 13.500 0 0 1 18.800 0M3.500 8a9.300 9.300 0 0 1 13 0M6.300 10.800a5.300 5.300 0 0 1 7.400 0" /><circle cx="10" cy="13" r="1.800" fill="#1a1a1a" stroke="none" /></Icon>
        </TraySlot>
        <TraySlot $w={39}>
          <Icon w={20} h={16} vb="0 0 20 16" stroke="#1a1a1a" strokeWidth="1.300"><path d="M1 5.500h2.500L8 1.500v13L3.500 10.500H1zM11 5.500q1.500 2.500 0 5M13.500 3.500q3 4.500 0 9" /><path d="M16 1.500q4.500 6.500 0 13" stroke="#bbb" /></Icon>
        </TraySlot>
        <TraySlot $w={22}>
          <Icon w={21} h={17} vb="0 0 21 17"><rect x="2" y="4.700" width="15.500" height="10.600" rx="2" stroke="#1a1a1a" strokeWidth="1.400" /><path d="M4 6.700h11.500v6.600H4zM18 8h2.300v4H18z" fill="#1a1a1a" /><path d="M4.500 0L.5 6h3L2.500 10l4.500-6H4z" fill="#1a1a1a" stroke="#f1f1f1" strokeWidth=".6" /></Icon>
        </TraySlot>
        <TrayText $w={97} $align="right" $ls={0.1}>23:53<br />12-07-2023</TrayText>
        <Notice>9</Notice>
      </Tray>
    </Taskbar>
  );
}

export default function App() {
  return (
    <Screen>
      <GlobalStyle />
      <BrowserChrome />
      <Page>
        <ProblemPane />
        <TestcasePane />
        <Scroll>
          <svg width="9" height="5" viewBox="0 0 9 5"><path d="M0 5L4.500 0 9 5z" fill="#505050" /></svg>
          <Thumb />
          <Caret w={9} h={5} fill="#505050" />
        </Scroll>
      </Page>
      <SystemBar />
    </Screen>
  );
}
